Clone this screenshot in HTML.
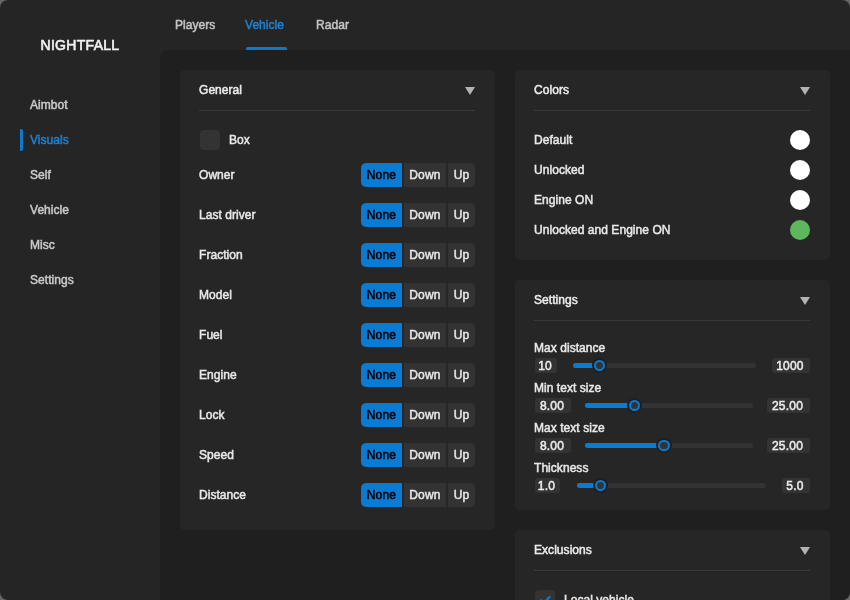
<!DOCTYPE html>
<html><head><meta charset="utf-8">
<style>
*{box-sizing:border-box;margin:0;padding:0}
html,body{width:850px;height:600px;overflow:hidden;background:#666}
body{font-family:"Liberation Sans",sans-serif;font-size:12px;color:#e8e8e8;position:relative}
.win{will-change:transform;position:absolute;left:0;top:0;width:850px;height:600px;background:#252525;border-radius:8px;overflow:hidden}
.t{position:absolute;white-space:nowrap;line-height:14px;letter-spacing:0.05px;-webkit-text-stroke:0.5px currentColor}
.logo{position:absolute;left:0px;width:160px;top:37px;text-align:center;font-weight:400;font-size:14px;line-height:16px;color:#f0f0f0;letter-spacing:0.3px;-webkit-text-stroke:0.65px currentColor}
.nav{left:30px;color:#c9c9c9}
.navbar{position:absolute;left:20px;top:129px;width:3px;height:22px;background:#0a79d0;border-radius:0 2px 2px 0}
.tab{color:#c4c4c4}
.tabline{position:absolute;left:246px;top:47px;width:41px;height:3px;background:#0a79d0;border-radius:2px 2px 0 0}
.blue{color:#1a82d4}
.content{position:absolute;left:160px;top:50px;width:690px;height:550px;background:#1f1f1f;border-radius:8px 0 0 0}
.panel{position:absolute;background:#262626;border-radius:5px}
.hdr{color:#ececec}
.sep{position:absolute;height:1px;background:#393939}
.tri{position:absolute;width:0;height:0;border-left:5px solid transparent;border-right:5px solid transparent;border-top:8px solid #b3b3b3}
.cb{position:absolute;width:20px;height:20px;border-radius:4px;background:#333}
.grp{position:absolute;height:24px}
.btn{position:absolute;top:0;height:24px;background:#333;line-height:24px;text-align:center;color:#e6e6e6;letter-spacing:0.2px;-webkit-text-stroke:0.5px currentColor}
.btn.on{background:#0b7ad1;color:#000;border-radius:5px 0 0 5px}
.btn.r{border-radius:0 5px 5px 0}
.circ{position:absolute;width:20px;height:20px;border-radius:50%;background:#fff}
.vbox{position:absolute;height:15px;border-radius:3px;background:#333;line-height:16px;padding-right:2px;text-align:center;color:#ececec;letter-spacing:0.2px;-webkit-text-stroke:0.5px currentColor}
.track{position:absolute;height:5px;border-radius:3px;background:#333}
.fill{position:absolute;left:0;top:0;height:5px;border-radius:3px 0 0 3px;background:#0b7ad1}
.knob{position:absolute;width:11.5px;height:11.5px;border-radius:50%;border:2px solid #0b7ad1;background:#333;box-shadow:0 0 0 2px #1f1f1f}
</style></head><body>
<div class="win">
  <div class="logo">NIGHTFALL</div>
  <div class="t nav" style="top:98px">Aimbot</div>
  <div class="navbar"></div>
  <div class="t nav blue" style="top:133px">Visuals</div>
  <div class="t nav" style="top:168px">Self</div>
  <div class="t nav" style="top:203px">Vehicle</div>
  <div class="t nav" style="top:238px">Misc</div>
  <div class="t nav" style="top:273px">Settings</div>

  <div class="t tab" style="left:175px;top:18px">Players</div>
  <div class="t tab blue" style="left:245px;top:18px">Vehicle</div>
  <div class="t tab" style="left:316px;top:18px">Radar</div>
  <div class="tabline"></div>

  <div class="content"></div>

  <!-- General panel -->
  <div class="panel" style="left:180px;top:70px;width:315px;height:460px"></div>
  <div class="t hdr" style="left:199px;top:83px">General</div>
  <div class="tri" style="left:465px;top:87px"></div>
  <div class="sep" style="left:199px;top:110px;width:276px"></div>
  <div class="cb" style="left:200px;top:130px"></div>
  <div class="t" style="left:229px;top:133px">Box</div>
  <div class="t" style="left:199px;top:168px">Owner</div>
  <div class="btn on" style="left:361px;top:163px;width:41px">None</div>
  <div class="btn" style="left:404px;top:163px;width:42px">Down</div>
  <div class="btn r" style="left:448px;top:163px;width:27px">Up</div>
  <div class="t" style="left:199px;top:208px">Last driver</div>
  <div class="btn on" style="left:361px;top:203px;width:41px">None</div>
  <div class="btn" style="left:404px;top:203px;width:42px">Down</div>
  <div class="btn r" style="left:448px;top:203px;width:27px">Up</div>
  <div class="t" style="left:199px;top:248px">Fraction</div>
  <div class="btn on" style="left:361px;top:243px;width:41px">None</div>
  <div class="btn" style="left:404px;top:243px;width:42px">Down</div>
  <div class="btn r" style="left:448px;top:243px;width:27px">Up</div>
  <div class="t" style="left:199px;top:288px">Model</div>
  <div class="btn on" style="left:361px;top:283px;width:41px">None</div>
  <div class="btn" style="left:404px;top:283px;width:42px">Down</div>
  <div class="btn r" style="left:448px;top:283px;width:27px">Up</div>
  <div class="t" style="left:199px;top:328px">Fuel</div>
  <div class="btn on" style="left:361px;top:323px;width:41px">None</div>
  <div class="btn" style="left:404px;top:323px;width:42px">Down</div>
  <div class="btn r" style="left:448px;top:323px;width:27px">Up</div>
  <div class="t" style="left:199px;top:368px">Engine</div>
  <div class="btn on" style="left:361px;top:363px;width:41px">None</div>
  <div class="btn" style="left:404px;top:363px;width:42px">Down</div>
  <div class="btn r" style="left:448px;top:363px;width:27px">Up</div>
  <div class="t" style="left:199px;top:408px">Lock</div>
  <div class="btn on" style="left:361px;top:403px;width:41px">None</div>
  <div class="btn" style="left:404px;top:403px;width:42px">Down</div>
  <div class="btn r" style="left:448px;top:403px;width:27px">Up</div>
  <div class="t" style="left:199px;top:448px">Speed</div>
  <div class="btn on" style="left:361px;top:443px;width:41px">None</div>
  <div class="btn" style="left:404px;top:443px;width:42px">Down</div>
  <div class="btn r" style="left:448px;top:443px;width:27px">Up</div>
  <div class="t" style="left:199px;top:488px">Distance</div>
  <div class="btn on" style="left:361px;top:483px;width:41px">None</div>
  <div class="btn" style="left:404px;top:483px;width:42px">Down</div>
  <div class="btn r" style="left:448px;top:483px;width:27px">Up</div>

  <!-- Colors panel -->
  <div class="panel" style="left:515px;top:70px;width:315px;height:190px"></div>
  <div class="t hdr" style="left:534px;top:83px">Colors</div>
  <div class="tri" style="left:800px;top:87px"></div>
  <div class="sep" style="left:534px;top:110px;width:276px"></div>
  <div class="t" style="left:534px;top:133px">Default</div>
  <div class="circ" style="left:790px;top:130px"></div>
  <div class="t" style="left:534px;top:163px">Unlocked</div>
  <div class="circ" style="left:790px;top:160px"></div>
  <div class="t" style="left:534px;top:193px">Engine ON</div>
  <div class="circ" style="left:790px;top:190px"></div>
  <div class="t" style="left:534px;top:223px">Unlocked and Engine ON</div>
  <div class="circ" style="left:790px;top:220px;background:#5cb85c"></div>

  <!-- Settings panel -->
  <div class="panel" style="left:515px;top:280px;width:315px;height:230px"></div>
  <div class="t hdr" style="left:534px;top:293px">Settings</div>
  <div class="tri" style="left:800px;top:297px"></div>
  <div class="sep" style="left:534px;top:320px;width:276px"></div>

  <div class="t" style="left:534px;top:341px">Max distance</div>
  <div class="vbox" style="left:535px;top:358px;width:22px">10</div>
  <div class="track" style="left:573px;top:363px;width:183px"><div class="fill" style="width:27px"></div></div>
  <div class="knob" style="left:593.75px;top:359.75px"></div>
  <div class="vbox" style="left:772px;top:358px;width:38px">1000</div>

  <div class="t" style="left:534px;top:381px">Min text size</div>
  <div class="vbox" style="left:535px;top:398px;width:36px">8.00</div>
  <div class="track" style="left:585px;top:403px;width:168px"><div class="fill" style="width:50px"></div></div>
  <div class="knob" style="left:628.75px;top:399.75px"></div>
  <div class="vbox" style="left:767px;top:398px;width:43px">25.00</div>

  <div class="t" style="left:534px;top:421px">Max text size</div>
  <div class="vbox" style="left:535px;top:438px;width:36px">8.00</div>
  <div class="track" style="left:585px;top:443px;width:168px"><div class="fill" style="width:80px"></div></div>
  <div class="knob" style="left:658.35px;top:439.75px"></div>
  <div class="vbox" style="left:767px;top:438px;width:43px">25.00</div>

  <div class="t" style="left:534px;top:461px">Thickness</div>
  <div class="vbox" style="left:535px;top:478px;width:25px">1.0</div>
  <div class="track" style="left:577px;top:483px;width:189px"><div class="fill" style="width:24px"></div></div>
  <div class="knob" style="left:594.65px;top:479.75px"></div>
  <div class="vbox" style="left:782px;top:478px;width:28px">5.0</div>

  <!-- Exclusions -->
  <div class="panel" style="left:515px;top:530px;width:315px;height:120px"></div>
  <div class="t hdr" style="left:534px;top:543px">Exclusions</div>
  <div class="tri" style="left:800px;top:547px"></div>
  <div class="sep" style="left:534px;top:570px;width:276px"></div>
  <div class="cb" style="left:535px;top:590px"></div>
  <svg style="position:absolute;left:530px;top:585px" width="30" height="20" viewBox="530 585 30 20"><polyline points="540.6,599.6 543.8,602.8 550.4,596.3" fill="none" stroke="#0b7ad1" stroke-width="2.1" stroke-linecap="butt" stroke-linejoin="miter"/></svg>
  <div class="t" style="left:564px;top:593px">Local vehicle</div>
</div>
</body></html>
